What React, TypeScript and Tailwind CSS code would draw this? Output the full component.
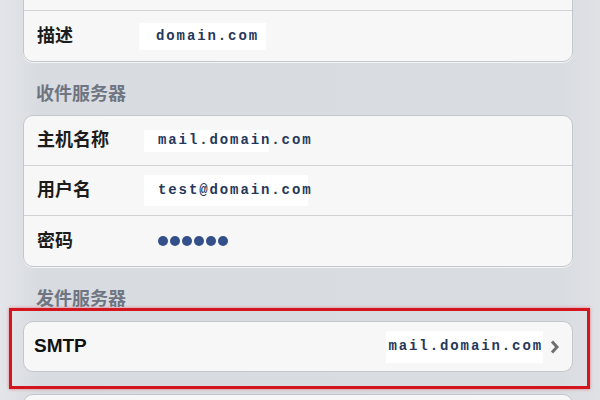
const cjk = "font-['Helvetica','Liberation_Sans','Noto_Sans_CJK_SC',sans-serif]";
const mono = "font-['Liberation_Mono','Noto_Sans_CJK_SC',monospace]";

interface RowProps {
  label: string;
  value?: string;
  box?: string;
  dots?: boolean;
  last?: boolean;
}

function Row({ label, value, box, dots, last }: RowProps) {
  return (
    <div
      className={`flex h-[50px] items-center pl-[13px] ${
        last ? '' : 'border-b border-[#cfd1d5]'
      }`}
    >
      <span className={`${cjk} w-[107px] shrink-0 text-[18px] font-bold text-[#1c1c1c]`}>
        {label}
      </span>
      {dots ? (
        <span className="ml-[14px] flex gap-[2px]">
          {[0, 1, 2, 3, 4, 5].map((i) => (
            <span key={i} className="h-[10px] w-[10px] rounded-full bg-[#34508a]" />
          ))}
        </span>
      ) : (
        <span className={`flex items-center bg-white ${box}`}>
          <span className={`${mono} text-[14px] font-bold tracking-[1.9px] text-[#26385a]`}>
            {value}
          </span>
        </span>
      )}
    </div>
  );
}

function Heading({ text, className }: { text: string; className: string }) {
  return (
    <div className={`${cjk} pl-[13px] text-[18px] font-bold leading-[20px] text-[#6f7581] ${className}`}>
      {text}
    </div>
  );
}

export default function App() {
  return (
    <div className="h-[400px] w-[600px] overflow-hidden bg-[linear-gradient(90deg,#e3e5e9_0px,#d8dbe0_40px,#d9dce1_560px,#dfe1e5_600px)]">
      <div className="pl-[23px] pr-[27px]">
        {/* Account info */}
        <div className="-mt-[40px] rounded-[10px] border border-[#c3c6cb] bg-[#f7f7f7] shadow-[0_1px_0_rgba(255,255,255,0.7)]">
          <Row label="" value="" box="h-0" />
          <Row label="描述" value="domain.com" box="h-[27px] -ml-[5px] w-[127px] pl-[17px]" last />
        </div>

        <Heading text="收件服务器" className="h-[53px] pt-[22px]" />

        {/* Incoming server */}
        <div className="rounded-[10px] border border-[#c3c6cb] bg-[#f7f7f7] shadow-[0_1px_0_rgba(255,255,255,0.7)]">
          <Row label="主机名称" value="mail.domain.com" box="h-[22px] w-[125px] pl-[14px] overflow-visible whitespace-nowrap" />
          <Row label="用户名" value="test@domain.com" box="h-[31px] w-[164px] pl-[14px]" />
          <Row label="密码" dots last />
        </div>

        <Heading text="发件服务器" className="h-[41px] pt-[22px]" />

        {/* Outgoing server, highlighted */}
        <div className="-ml-[14px] -mr-[17px] border-[3px] border-[#d3161d] pb-[14px] pl-[11px] pr-[14px] pt-[10px] shadow-[0_0_3px_rgba(230,60,70,0.6)]">
          <div className="flex h-[51px] items-center rounded-[10px] border border-[#c3c6cb] bg-[#f7f7f7] pl-[10px] pr-[12px]">
            <span className="font-['Helvetica','Liberation_Sans',sans-serif] text-[19px] font-bold text-[#111]">
              SMTP
            </span>
            <span className="ml-auto flex h-[32px] items-center whitespace-nowrap bg-white pl-[2px]">
              <span className={`${mono} text-[14px] font-bold tracking-[1.9px] text-[#26385a]`}>
                mail.domain.com
              </span>
            </span>
            <svg width="11" height="14" viewBox="0 0 11 14" className="ml-[6px]">
              <path d="M3 1.5l5 5.5-5 5.5" fill="none" stroke="#6f6f6f" strokeWidth="3" />
            </svg>
          </div>
        </div>

        <div className="mt-[5px] h-[40px] rounded-[10px] border border-[#c3c6cb] bg-[#f7f7f7]" />
      </div>
    </div>
  );
}
